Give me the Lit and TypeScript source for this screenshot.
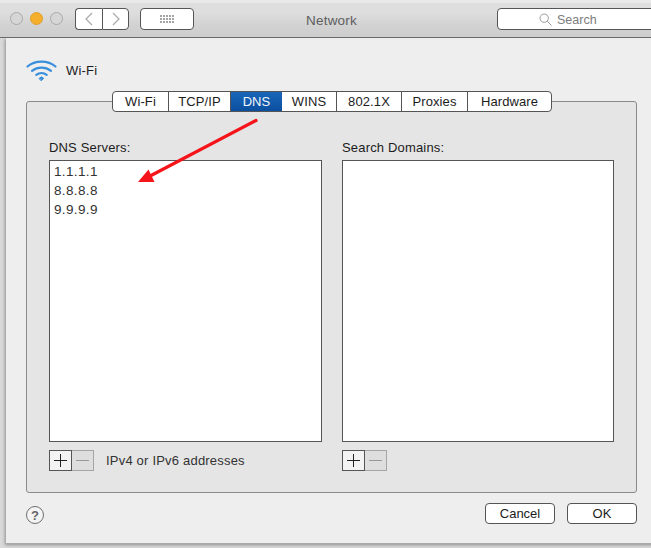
import { LitElement, html, css, svg } from "lit";
import { customElement } from "lit/decorators.js";

const TABS = ["Wi-Fi", "TCP/IP", "DNS", "WINS", "802.1X", "Proxies", "Hardware"];
const TAB_W = [56, 62, 51, 55, 65, 66, 83];
const DOTS = [0, 1, 2].flatMap((r) => [0, 1, 2, 3, 4].map((c) => svg`<rect x=${c * 3} y=${r * 3} width="2" height="2" fill="#a5a5a5"/>`));

@customElement("app-root")
export class AppRoot extends LitElement {
  static styles = css`
    :host { display: block; position: relative; width: 651px; height: 548px; overflow: hidden; background: #d9d9d9;
      font-family: "Liberation Sans", Arial, sans-serif; font-size: 13px; color: #1c1c1c; }
    .toolbar { height: 37px; box-sizing: content-box; border-bottom: 1px solid #6a6a6a; display: flex; align-items: center;
      background: linear-gradient(#e9e9e9 0 3px, #dedede 3px 12px, #d3d3d3 24px, #cdcdcd); padding-left: 10px; position: relative; }
    .lights { display: flex; gap: 7px; margin-right: 12px; }
    .light { width: 11px; height: 11px; border-radius: 50%; border: 1px solid #a9a9a9; background: #d6d6d6; box-sizing: content-box; }
    .light.on { background: #f6ae2d; border-color: #e09f2a; }
    .tool { background: #fff; border: 1px solid #555; box-sizing: border-box; height: 22px; display: flex; align-items: center; justify-content: center; border-radius: 4px; }
    .nav { display: flex; margin-right: 11px; }
    .nav .tool { width: 27px; }
    .nav .tool:first-child { border-radius: 4px 0 0 4px; border-right: 0; }
    .nav .tool:last-child { border-radius: 0 4px 4px 0; }
    .grid { width: 54px; }
    .title { flex: 1; text-align: center; color: #5e5e5e; font-size: 13.5px; letter-spacing: .2px; padding-right: 28px; padding-top: 4px; }
    .search { width: 160px; margin-right: -6px; border-radius: 4px 0 0 4px; justify-content: flex-start; padding-left: 41px; gap: 5px; color: #7d7d7d; font-size: 12.5px; flex: none; padding-top: 2px; }

    .sheet { margin-left: 6px; height: 506px; background: #eeeeee; box-shadow: -1px 1px 3px #8f8f8f; border-bottom: 1px solid #a9a9a9; padding: 0 14px 0 20px; box-sizing: border-box; width: 651px; }
    .device { display: flex; align-items: center; gap: 9px; height: 53px; padding-top: 11px; box-sizing: border-box; margin-bottom: -4px; }
    .device-name { padding-top: 1px; letter-spacing: .2px; }
    .panel { position: relative; width: 611px; height: 392px; margin-top: 14px; background: #e5e5e5; border: 1px solid #8a8a8a; border-radius: 3px; box-sizing: border-box; padding: 39px 22px 0 22px; }
    .tabs { position: absolute; left: 85px; top: -11px; display: flex; height: 21px; background: #fff; border: 1px solid #555; border-radius: 4px; box-sizing: border-box; overflow: hidden; }
    .tab { display: flex; align-items: center; justify-content: center; box-sizing: border-box; border-right: 1px solid #555; letter-spacing: .1px; }
    .tab:last-child { border-right: 0; }
    .tab.sel { background: linear-gradient(#1a66b8, #0b4f9f); color: #f2f6fb; border-right: 0; }
    .cols { display: grid; grid-template-columns: 273px 272px; column-gap: 20px; }
    .label { height: 14px; line-height: 14px; margin-bottom: 5px; letter-spacing: .17px; }
    .list { height: 282px; background: #fff; border: 1px solid #555; box-sizing: border-box; padding: 1px 4px; font-size: 13.5px; letter-spacing: .35px; color: #333; }
    .list div { height: 19px; line-height: 19px; }
    .under { display: flex; align-items: center; margin-top: 8px; height: 21px; }
    .seg { width: 23px; height: 21px; box-sizing: border-box; border: 1px solid #555; display: flex; align-items: center; justify-content: center; background: #f3f3f3; }
    .seg.off { width: 22px; border: 1px solid #a5a5a5; border-left: 0; background: #dedede; }
    .hint { margin-left: 12px; letter-spacing: .2px; color: #333; }
    .foot { display: flex; align-items: center; width: 611px; margin-top: 9px; }
    .help { width: 18px; height: 18px; border-radius: 50%; border: 1px solid #6e6e6e; box-sizing: border-box; background: #f4f4f4; display: flex; align-items: center; justify-content: center; font-size: 13px; color: #666; font-weight: 700; margin-top: 4px; }
    .spacer { flex: 1; }
    .btn { width: 70px; height: 21px; background: #fff; border: 1px solid #555; border-radius: 4px; box-sizing: border-box; display: flex; align-items: center; justify-content: center; margin-left: 12px; }
    .arrow { position: absolute; left: 0; top: 0; pointer-events: none; }
  `;

  render() {
    return html`
      <div class="toolbar">
        <div class="lights"><span class="light"></span><span class="light on"></span><span class="light"></span></div>
        <div class="nav">
          <div class="tool"><svg width="10" height="14" viewBox="0 0 10 14" fill="none" stroke="#a8a8a8" stroke-width="1.2"><path d="M8 1 2 7l6 6"/></svg></div>
          <div class="tool"><svg width="10" height="14" viewBox="0 0 10 14" fill="none" stroke="#a8a8a8" stroke-width="1.2"><path d="m2 1 6 6-6 6"/></svg></div>
        </div>
        <div class="tool grid"><svg width="14" height="8">${DOTS}</svg></div>
        <div class="title">Network</div>
        <div class="tool search">
          <svg width="13" height="13" viewBox="0 0 13 13" fill="none" stroke="#9b9b9b" stroke-width="1"><circle cx="5.2" cy="5.2" r="4.2"/><path d="m8.2 8.2 4.3 4.3"/></svg>
          <span>Search</span>
        </div>
      </div>
      <div class="sheet">
        <div class="device">
          <svg width="31" height="23" viewBox="0 0 31 23" fill="none" stroke="#3a8fdc" stroke-width="2.2" stroke-linecap="round">
            <path d="M1.500 7.500C9 1 22 1 29.500 7.500"/><path d="M6 11.800c5.500-4.300 13.500-4.300 19 0"/><path d="M10.300 15.800c3-2.200 7.400-2.200 10.400 0"/>
            <path d="m13.300 19.300 2.200-1.500 2.200 1.500-2.200 2.300z" fill="#3a8fdc" stroke-width="1"/>
          </svg>
          <span class="device-name">Wi-Fi</span>
        </div>
        <div class="panel">
          <div class="tabs">
            ${TABS.map((t, i) => html`<div class="tab ${t === "DNS" ? "sel" : ""}" style="width:${TAB_W[i]}px">${t}</div>`)}
          </div>
          <div class="cols">
            <div>
              <div class="label">DNS Servers:</div>
              <div class="list"><div>1.1.1.1</div><div>8.8.8.8</div><div>9.9.9.9</div></div>
              <div class="under">
                <div class="seg"><svg width="13" height="13" stroke="#222"><path d="M6.500 0v13M0 6.500h13"/></svg></div>
                <div class="seg off"><svg width="13" height="13" stroke="#999"><path d="M0 6.500h13"/></svg></div>
                <span class="hint">IPv4 or IPv6 addresses</span>
              </div>
            </div>
            <div>
              <div class="label">Search Domains:</div>
              <div class="list"></div>
              <div class="under">
                <div class="seg"><svg width="13" height="13" stroke="#222"><path d="M6.500 0v13M0 6.500h13"/></svg></div>
                <div class="seg off"><svg width="13" height="13" stroke="#999"><path d="M0 6.500h13"/></svg></div>
              </div>
            </div>
          </div>
        </div>
        <div class="foot">
          <div class="help">?</div>
          <div class="spacer"></div>
          <div class="btn">Cancel</div>
          <div class="btn">OK</div>
        </div>
      </div>
      <svg class="arrow" width="651" height="548" fill="#f5141a" stroke="none">
        <path d="M256 120.500 152 175" stroke="#f5141a" stroke-width="3.2" stroke-linecap="round"/>
        <path d="M138 182 148.500 169.500 154.500 182z"/>
      </svg>
    `;
  }
}
